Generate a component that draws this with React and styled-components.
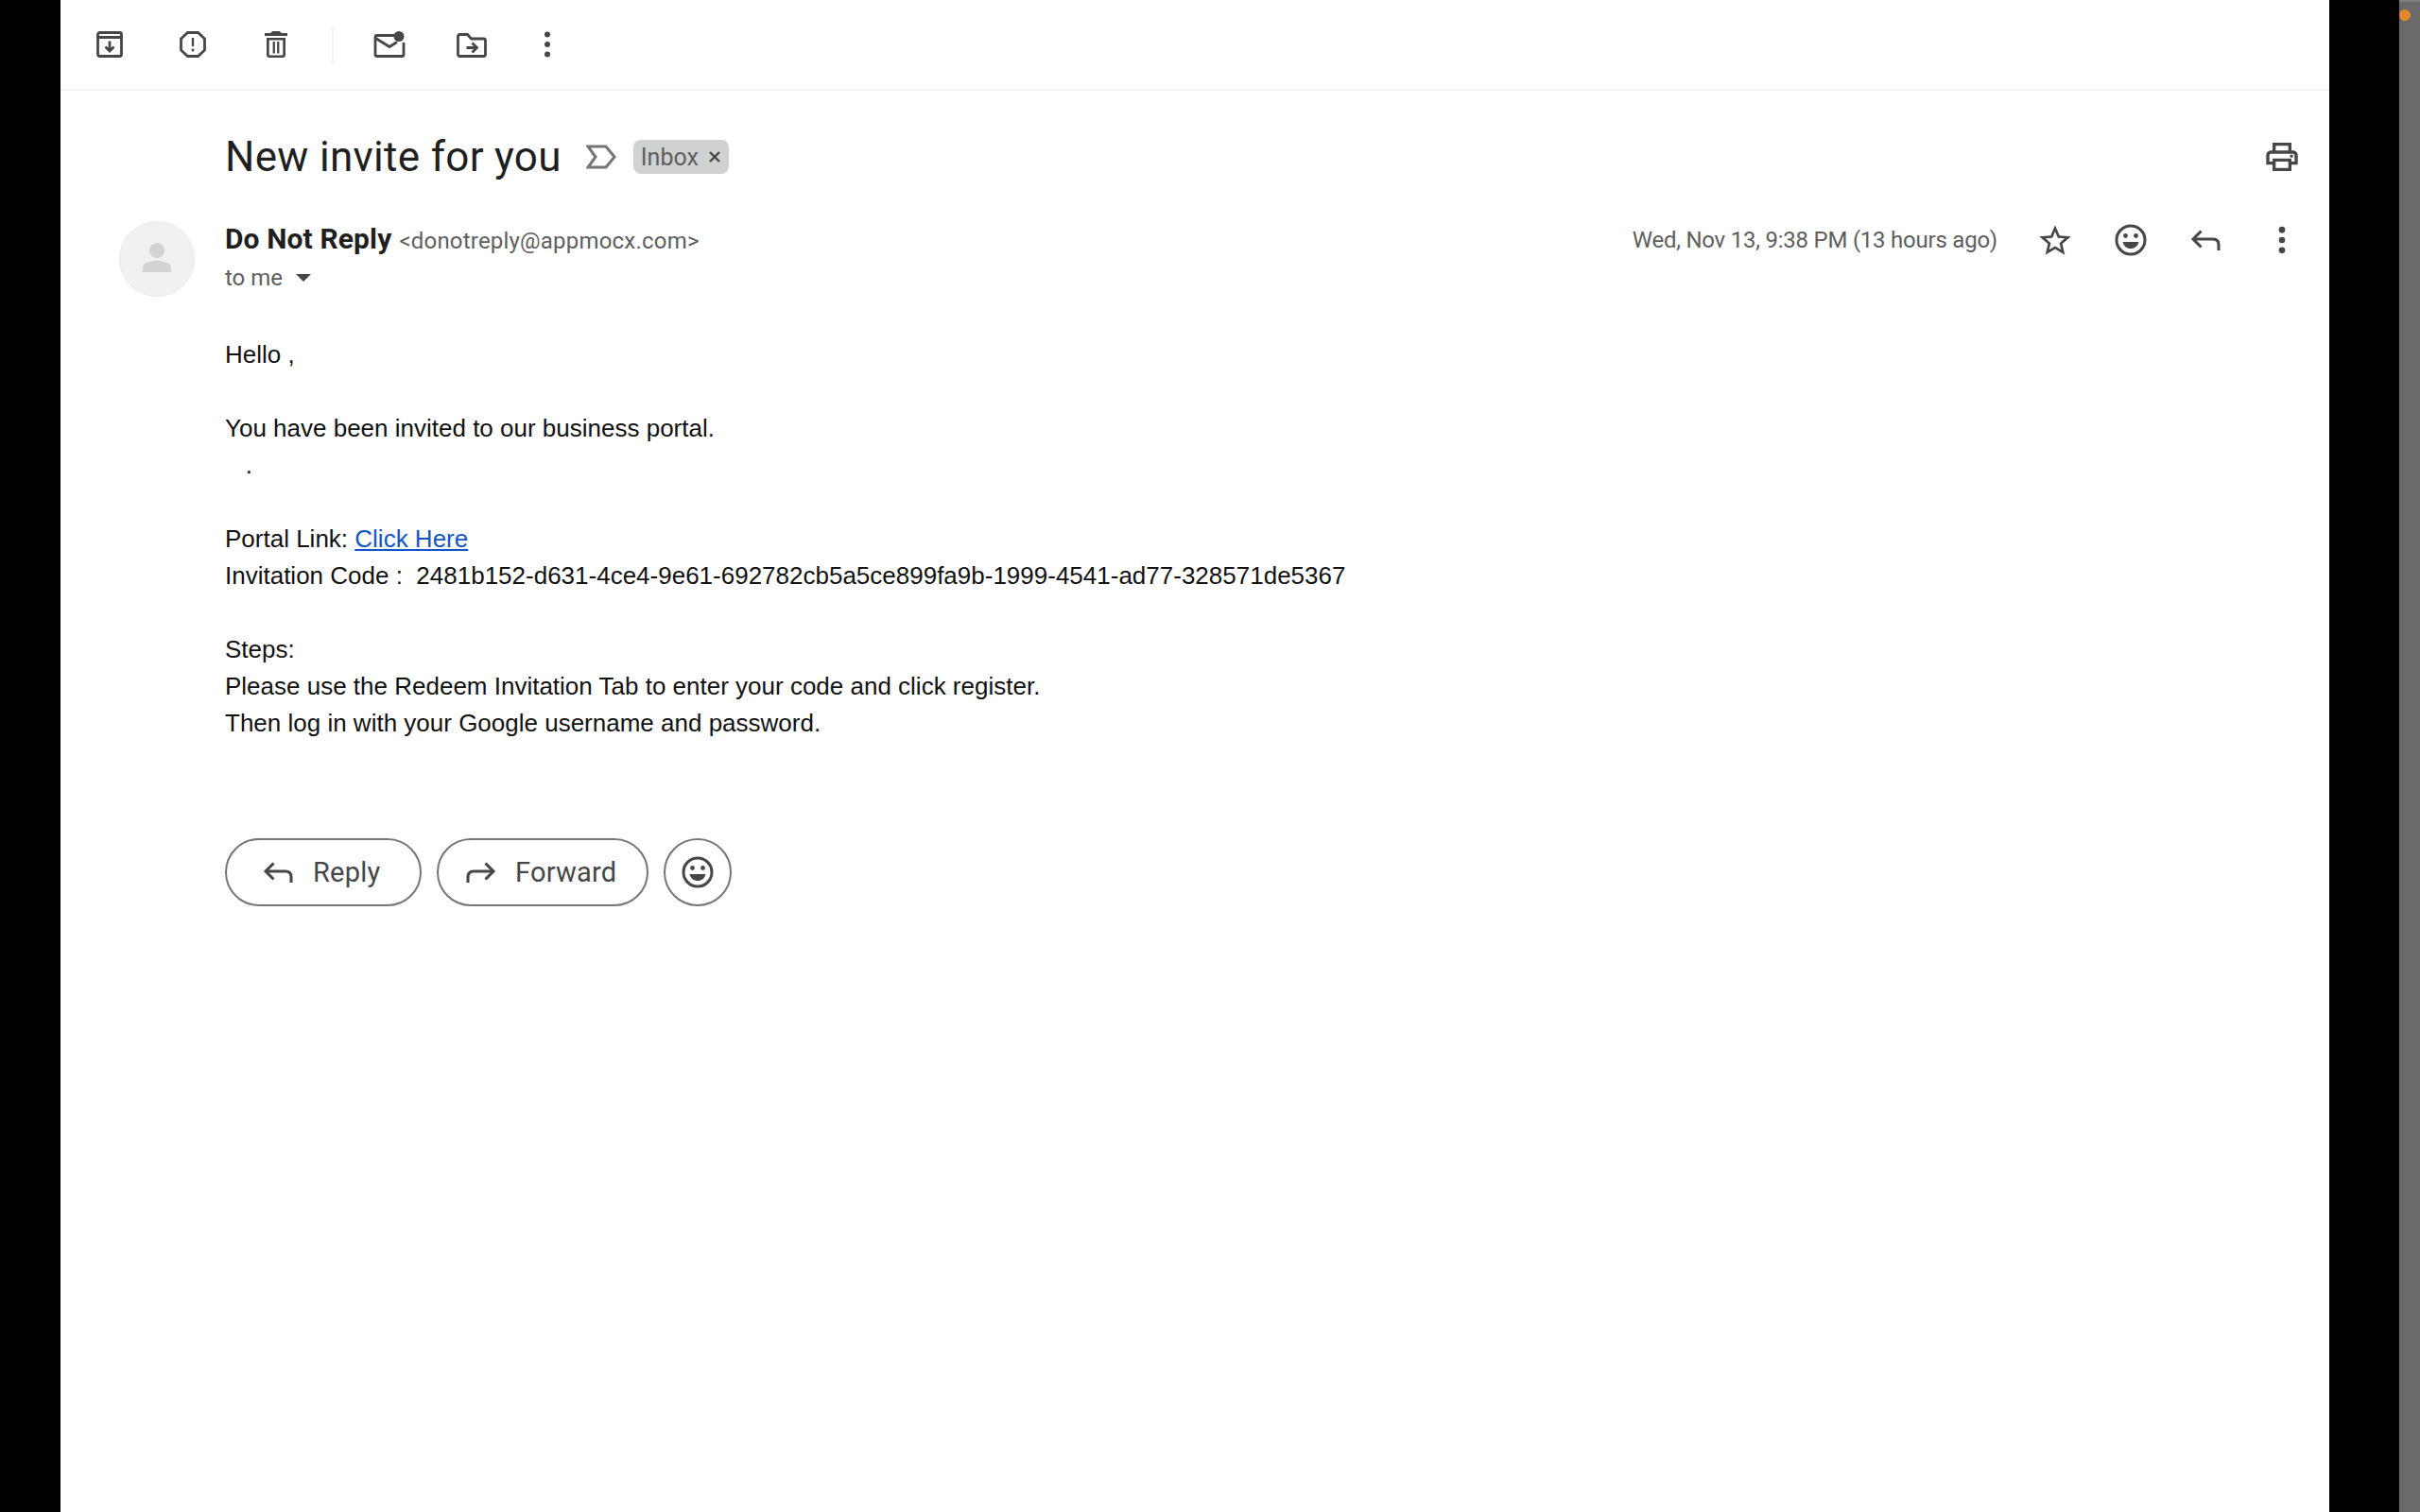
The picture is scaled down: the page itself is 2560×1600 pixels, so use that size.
import React from 'react';
import styled, { createGlobalStyle } from 'styled-components';

const GlobalStyle = createGlobalStyle`
  html, body { margin: 0; padding: 0; background: #000; }
  * { box-sizing: border-box; }
`;

const Page = styled.div`
  display: flex;
  height: 1600px;
  overflow: hidden;
  background: #000;
`;

const Panel = styled.main`
  flex: 0 0 2400px;
  margin-left: 64px;
  background: #fff;
  color: #1f1f1f;
  font-family: Roboto, "Liberation Sans", sans-serif;
`;

const ScrollGutter = styled.div`
  flex: 0 0 22px;
  margin-left: 74px;
  background: #6a6a6a;
  border-top: 2px solid #808080;
  display: flex;
  justify-content: center;
  padding-top: 8px;
  padding-right: 10px;
`;

const OrangeDot = styled.span`
  flex: 0 0 12px;
  width: 12px;
  height: 12px;
  border-radius: 50%;
  background: #e38a2e;
`;

const Toolbar = styled.div`
  display: flex;
  align-items: center;
  height: 96px;
  padding: 0 0 0 38px;
  border-bottom: 2px solid #f1f1f1;
`;

const ToolIcon = styled.span`
  display: flex;
  flex: none;
  margin-right: ${(p) => p.$gap ?? 60}px;
  color: #444746;
  svg { display: block; flex: none; }
`;

const ToolDivider = styled.span`
  flex: 0 0 2px;
  height: 40px;
  margin: 0 42px 0 -15px;
  background: #f1f1f1;
`;

const SubjectRow = styled.div`
  display: flex;
  align-items: center;
  height: 72px;
  margin-top: 34px;
  padding: 0 30px 0 174px;
`;

const Subject = styled.h1`
  margin: 0 26px 0 0;
  font-size: 44px;
  font-weight: 400;
  letter-spacing: 0.3px;
  line-height: 56px;
  color: #1f1f1f;
`;

const LabelIcon = styled.svg`
  flex: 0 0 32px;
  margin-right: 18px;
`;

const Chip = styled.span`
  display: flex;
  align-items: center;
  gap: 10px;
  height: 36px;
  padding: 0 8px;
  border-radius: 8px;
  background: #d0d1d1;
  color: #5e5e5e;
  font-size: 25px;
`;

const PrintIcon = styled.span`
  display: flex;
  margin-left: auto;
  color: #444746;
`;

const MessageRow = styled.div`
  display: flex;
  margin-top: 32px;
  padding: 0 30px 0 62px;
`;

const Avatar = styled.div`
  flex: 0 0 80px;
  width: 80px;
  height: 80px;
  margin-right: 32px;
  border-radius: 50%;
  background: #f0f2f2;
  border: 1px solid #e8eaea;
  svg { display: block; }
`;

const MessageMain = styled.div`
  flex: 1;
`;

const SenderRow = styled.div`
  display: flex;
  align-items: center;
  justify-content: space-between;
  height: 40px;
`;

const Sender = styled.div`
  font-size: 30px;
  line-height: 40px;
  white-space: nowrap;
`;

const SenderName = styled.strong`
  font-weight: 700;
  letter-spacing: 0.12px;
  margin-right: 8px;
  color: #1f1f1f;
`;

const SenderMail = styled.span`
  font-size: 24px;
  letter-spacing: 0.2px;
  color: #5e5e5e;
`;

const Actions = styled.div`
  display: flex;
  align-items: center;
`;

const DateText = styled.span`
  font-size: 24px;
  letter-spacing: -0.23px;
  color: #5e5e5e;
  margin-right: 41px;
  white-space: nowrap;
`;

const ActionIcon = styled.span`
  display: flex;
  flex: 0 0 40px;
  justify-content: center;
  margin-left: ${(p) => (p.$first ? 0 : 40)}px;
  color: #444746;
`;

const ToMe = styled.div`
  display: flex;
  align-items: center;
  gap: 14px;
  height: 40px;
  font-size: 24px;
  color: #5e5e5e;
`;

const Caret = styled.span`
  width: 0;
  height: 0;
  border-left: 8px solid transparent;
  border-right: 8px solid transparent;
  border-top: 8px solid #444746;
`;

const Body = styled.div`
  margin-top: 42px;
  font-family: "Liberation Sans", Arial, sans-serif;
  font-size: 26px;
  line-height: 39px;
  color: #111;
`;

const BodyLine = styled.div`
  min-height: 39px;
  white-space: pre;
`;

const BodyLink = styled.a`
  color: #1155cc;
  text-decoration: underline;
`;

const ButtonRow = styled.div`
  display: flex;
  gap: 16px;
  margin-top: 102px;
`;

const PillButton = styled.button`
  display: flex;
  align-items: center;
  gap: ${(p) => p.$gap ?? 16}px;
  width: ${(p) => p.$width}px;
  height: 72px;
  padding: 0 0 0 ${(p) => p.$pad}px;
  border: 2px solid #747775;
  border-radius: 36px;
  background: #fff;
  color: #444746;
  font-family: Roboto, sans-serif;
  font-size: 29px;
  font-weight: 400;
  letter-spacing: 0.2px;
`;

const RoundButton = styled(PillButton)`
  justify-content: center;
  padding: 0;
`;

const ReplyGlyph = ({ size = 40 }) => (
  <svg width={size} height={size} viewBox="0 0 40 40" fill="none" stroke="currentColor" strokeWidth="3">
    <path d="M14.500 10.500 6 19l8.500 8.500" />
    <path d="M6 19h21c4 0 6 2 6 6v6" />
  </svg>
);

const ForwardGlyph = ({ size = 40 }) => (
  <svg width={size} height={size} viewBox="0 0 40 40" fill="none" stroke="currentColor" strokeWidth="3">
    <path d="M25.500 10.500 34 19l-8.500 8.500" />
    <path d="M34 19H13c-4 0-6 2-6 6v6" />
  </svg>
);

const SmileGlyph = ({ size = 40 }) => (
  <svg width={size} height={size} viewBox="0 0 40 40">
    <circle cx="20" cy="20" r="15" fill="none" stroke="currentColor" strokeWidth="3" />
    <circle cx="14.500" cy="15.500" r="2.400" fill="currentColor" />
    <circle cx="25.500" cy="15.500" r="2.400" fill="currentColor" />
    <path d="M11.500 22h17c-1 4.400-4.300 7-8.500 7s-7.500-2.600-8.500-7z" fill="currentColor" />
  </svg>
);

const DotsGlyph = ({ size = 40 }) => (
  <svg width={size} height={size} viewBox="0 0 24 24" fill="currentColor">
    <circle cx="12" cy="5.500" r="2" />
    <circle cx="12" cy="12" r="2" />
    <circle cx="12" cy="18.500" r="2" />
  </svg>
);

const StarGlyph = () => (
  <svg width="40" height="40" viewBox="0 -0.500 24 24" fill="currentColor">
    <path d="M22 9.240l-7.190-.620L12 2 9.190 8.630 2 9.240l5.460 4.730L5.820 21 12 17.270 18.180 21l-1.630-7.030L22 9.240zM12 15.400l-3.760 2.270 1-4.280-3.320-2.880 4.380-.380L12 6.100l1.710 4.040 4.380.380-3.320 2.880 1 4.280L12 15.400z" />
  </svg>
);

const PrintGlyph = () => (
  <svg width="40" height="40" viewBox="0 0 24 24" fill="currentColor">
    <path d="M19 8h-1V3H6v5H5c-1.660 0-3 1.340-3 3v6h4v4h12v-4h4v-6c0-1.660-1.340-3-3-3zM8 5h8v3H8V5zm8 14H8v-4h8v4zm4-4h-2v-2H6v2H4v-4c0-.550.450-1 1-1h14c.550 0 1 .450 1 1v4z" />
    <circle cx="18" cy="11.500" r="1" />
  </svg>
);

const ArchiveGlyph = () => (
  <svg width="28" height="28" viewBox="0 0 28 28" fill="none" stroke="currentColor" strokeWidth="2.800">
    <path d="M1.500 7V3.500c0-1 .8-2 2-2h21c1.200 0 2 1 2 2V7" />
    <path d="M1.500 6.500h25v18c0 1.200-.8 2-2 2h-21c-1.200 0-2-.8-2-2z" />
    <path d="M14 10.500v10M9.500 16.500 14 21l4.500-4.500" />
  </svg>
);

const ReportGlyph = () => (
  <svg width="28" height="28" viewBox="0 0 28 28">
    <path d="M8.500 1.500h11L26.500 8v12l-7 6.500h-11L1.500 20V8z" fill="none" stroke="currentColor" strokeWidth="2.800" />
    <path d="M12.800 7h2.400v9h-2.400z" fill="currentColor" />
    <circle cx="14" cy="20" r="1.500" fill="currentColor" />
  </svg>
);

const TrashGlyph = () => (
  <svg width="28" height="28" viewBox="0 0 28 28" fill="currentColor">
    <path d="M10 0h8l1.500 2H26v3H2V2h6.500zM4 7h20v18c0 1.700-1.300 3-3 3H7c-1.700 0-3-1.300-3-3zm2.700 2.500V25c0 .3.200.5.500.5h13.600c.3 0 .5-.2.500-.5V9.500z" />
    <path d="M10.600 11h2.300v12.500h-2.300zM15.100 11h2.300v12.500h-2.300z" />
  </svg>
);

const MailDotGlyph = () => (
  <svg width="34" height="28" viewBox="0 0 34 28">
    <path d="M24 4.500H4c-1.200 0-2 .8-2 2v18c0 1.200.8 2 2 2h26c1.200 0 2-.8 2-2V12" fill="none" stroke="currentColor" strokeWidth="2.800" />
    <path d="M2.500 7.500 17 16.500l8-5" fill="none" stroke="currentColor" strokeWidth="2.800" />
    <circle cx="27" cy="5.500" r="5.500" fill="currentColor" />
  </svg>
);

const MoveGlyph = () => (
  <svg width="34" height="28" viewBox="0 0 34 28" fill="none" stroke="currentColor" strokeWidth="2.800">
    <path d="M3.500 3.500h8l4 4.500h13c1.200 0 2 .8 2 2v14.500c0 1.200-.8 2-2 2H3.500c-1.200 0-2-.8-2-2v-19c0-1.200.8-2 2-2z" />
    <path d="M10.500 17.500h11M16.500 12.500l5 5-5 5" />
  </svg>
);

const ToolDots = () => (
  <svg width="10" height="28" viewBox="0 0 10 28" fill="currentColor">
    <circle cx="5" cy="3.500" r="3" />
    <circle cx="5" cy="14" r="3" />
    <circle cx="5" cy="24.500" r="3" />
  </svg>
);

const App = () => (
  <>
    <GlobalStyle />
    <Page>
      <Panel>
        <Toolbar>
          <ToolIcon><ArchiveGlyph /></ToolIcon>
          <ToolIcon><ReportGlyph /></ToolIcon>
          <ToolIcon><TrashGlyph /></ToolIcon>
          <ToolDivider />
          <ToolIcon $gap={54}><MailDotGlyph /></ToolIcon>
          <ToolIcon $gap={57}><MoveGlyph /></ToolIcon>
          <ToolIcon><ToolDots /></ToolIcon>
        </Toolbar>

        <SubjectRow>
          <Subject>New invite for you</Subject>
          <LabelIcon width="32" height="26" viewBox="0 0 32 26" fill="none" stroke="#757575" strokeWidth="3">
            <path d="M2 2h19l9 11-9 11H2l8-11z" />
          </LabelIcon>
          <Chip>
            Inbox
            <svg width="14" height="14" viewBox="0 0 14 14" stroke="#444746" strokeWidth="2.400">
              <path d="M2 2l10 10M12 2 2 12" />
            </svg>
          </Chip>
          <PrintIcon><PrintGlyph /></PrintIcon>
        </SubjectRow>

        <MessageRow>
          <Avatar>
            <svg width="78" height="78" viewBox="0 0 78 78" fill="#d2d3d3">
              <circle cx="39" cy="30" r="8" />
              <path d="M24 53v-5c0-5 8-7 15-7s15 2 15 7v5z" />
            </svg>
          </Avatar>
          <MessageMain>
            <SenderRow>
              <Sender>
                <SenderName>Do Not Reply</SenderName>
                <SenderMail>&lt;donotreply@appmocx.com&gt;</SenderMail>
              </Sender>
              <Actions>
                <DateText>Wed, Nov 13, 9:38 PM (13 hours ago)</DateText>
                <ActionIcon $first><StarGlyph /></ActionIcon>
                <ActionIcon><SmileGlyph /></ActionIcon>
                <ActionIcon><ReplyGlyph /></ActionIcon>
                <ActionIcon><DotsGlyph /></ActionIcon>
              </Actions>
            </SenderRow>
            <ToMe>to me <Caret /></ToMe>

            <Body>
              <BodyLine>Hello ,</BodyLine>
              <BodyLine />
              <BodyLine>You have been invited to our business portal.</BodyLine>
              <BodyLine>{'\u00a0\u00a0\u00a0.'}</BodyLine>
              <BodyLine />
              <BodyLine>Portal Link: <BodyLink href="#">Click Here</BodyLink></BodyLine>
              <BodyLine>Invitation Code :  2481b152-d631-4ce4-9e61-692782cb5a5ce899fa9b-1999-4541-ad77-328571de5367</BodyLine>
              <BodyLine />
              <BodyLine>Steps:</BodyLine>
              <BodyLine>Please use the Redeem Invitation Tab to enter your code and click register.</BodyLine>
              <BodyLine>Then log in with your Google username and password.</BodyLine>
            </Body>

            <ButtonRow>
              <PillButton $width={208} $pad={35}><ReplyGlyph />Reply</PillButton>
              <PillButton $width={224} $pad={24} $gap={17}><ForwardGlyph />Forward</PillButton>
              <RoundButton $width={72}><SmileGlyph /></RoundButton>
            </ButtonRow>
          </MessageMain>
        </MessageRow>
      </Panel>
      <ScrollGutter><OrangeDot /></ScrollGutter>
    </Page>
  </>
);

export default App;
